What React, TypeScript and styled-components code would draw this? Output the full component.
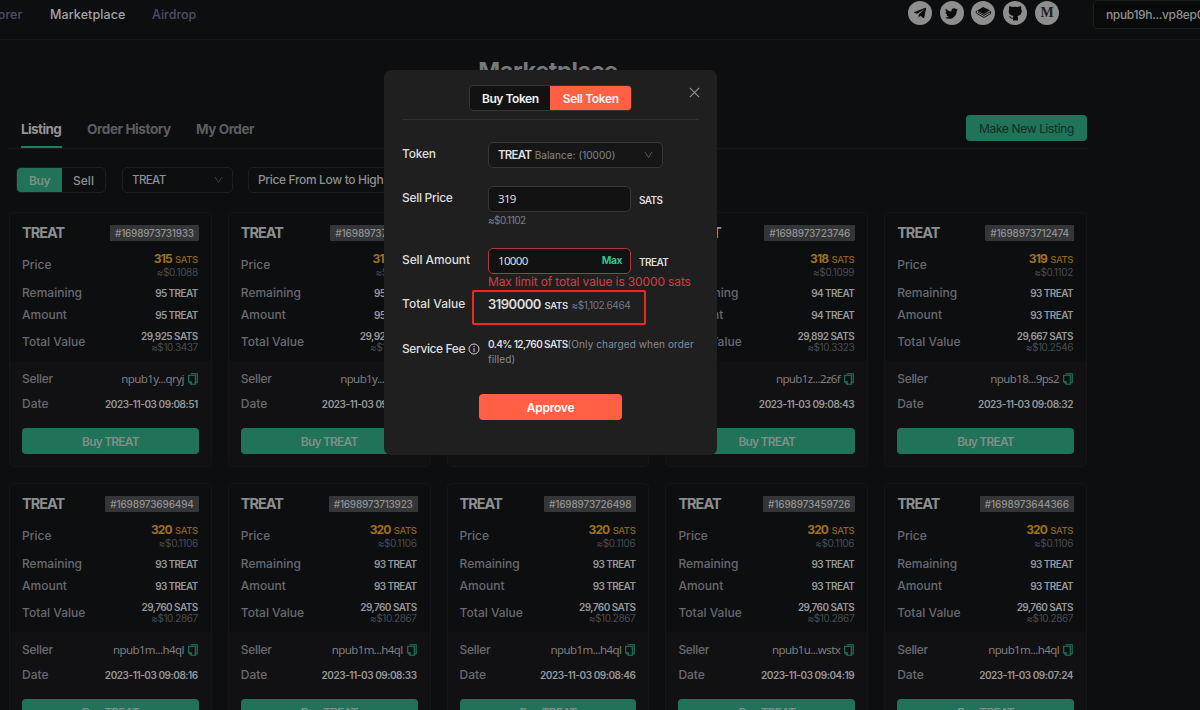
import React from "react";
import styled, { createGlobalStyle } from "styled-components";
import { FaTelegramPlane, FaTwitter } from "react-icons/fa";

const GlobalStyle = createGlobalStyle`
  * { box-sizing: border-box; }
  body { margin: 0; background: #0c0e10; overflow: hidden; }
`;

const Page = styled.div`
  position: relative;
  width: 1200px;
  height: 710px;
  overflow: hidden;
  background: #0c0e10;
  color: #8f9091;
  font-family: Inter, "Noto Sans", sans-serif;
  font-size: 12px;
  line-height: 16px;
  white-space: nowrap;
`;

/* Run of text with its own size, weight, tracking and colour. */
const Text = styled.span<{ $s?: number; $w?: number; $ls?: number; $c?: string }>`
  font-size: ${(p) => p.$s ?? 12}px;
  font-weight: ${(p) => p.$w ?? 500};
  letter-spacing: ${(p) => p.$ls ?? 0}px;
  color: ${(p) => p.$c ?? "inherit"};
`;

const Header = styled.header`
  display: flex;
  align-items: flex-start;
  justify-content: space-between;
  height: 40px;
  border-bottom: 1px solid #131518;
`;

const Nav = styled.nav`
  display: flex;
  gap: 27px;
  height: 29px;
  align-items: center;
  margin-left: -28px;
`;

const NavItem = styled.a<{ $active?: boolean; $width: number; $ls: number }>`
  width: ${(p) => p.$width}px;
  font-size: 12.5px;
  font-weight: 500;
  letter-spacing: ${(p) => p.$ls}px;
  color: ${(p) => (p.$active ? "#a3a4a5" : "#4d4f66")};
`;

const HeaderRight = styled.div`
  display: flex;
  margin-right: -60px;
`;

const Socials = styled.div`
  display: flex;
  gap: 7.8px;
  padding-top: 1px;
  margin-right: 34px;
`;

const Social = styled.span`
  display: flex;
  align-items: center;
  justify-content: center;
  width: 24px;
  height: 24px;
  border-radius: 50%;
  background: #8e8e8e;
  color: #0b0c0d;
`;

const MediumMark = styled.b`
  font: bold 14px/24px "Liberation Serif", serif;
  color: #1c1c1c;
`;

const Account = styled.div`
  width: 167px;
  height: 29px;
  padding-left: 12px;
  border: 1px solid #1c1e20;
  border-radius: 5px;
  background: #090a0a;
  line-height: 27px;
`;

const Main = styled.main`
  width: 1078px;
  margin-left: 9px;
`;

const Title = styled.h1`
  margin: 0;
  height: 77px;
  padding-top: 15px;
  text-align: center;
  font-size: 23.5px;
  font-weight: 700;
  letter-spacing: -0.4px;
  line-height: 32px;
  color: #77787a;
`;

const TabBar = styled.div`
  display: flex;
  justify-content: space-between;
  height: 32px;
  border-bottom: 1px solid #17191b;
`;

const Tabs = styled.div`
  display: flex;
  gap: 25px;
  padding-left: 12px;
`;

const Tab = styled.div<{ $active?: boolean; $width: number; $ls: number }>`
  width: ${(p) => p.$width}px;
  height: 31px;
  padding-top: 4px;
  font-size: 13.5px;
  font-weight: 700;
  letter-spacing: ${(p) => p.$ls}px;
  color: ${(p) => (p.$active ? "#939495" : "#5c5d60")};
  border-bottom: 2px solid ${(p) => (p.$active ? "#1f7d66" : "transparent")};
`;

const NewListing = styled.button`
  width: 121px;
  height: 26px;
  margin-top: -2px;
  padding: 0;
  border: 0;
  border-radius: 4px;
  background: #207258;
  font-family: inherit;
  color: #0f2d25;
`;

const Filters = styled.div`
  display: flex;
  height: 63px;
  padding: 18px 0 0 7px;
`;

const Side = styled.div`
  display: flex;
  width: 90px;
  height: 26px;
  margin-right: 16px;
  border: 1px solid #1c1e20;
  border-radius: 5px;
  overflow: hidden;
`;

const SideOption = styled.span<{ $active?: boolean }>`
  width: ${(p) => (p.$active ? 45 : 43)}px;
  text-align: center;
  line-height: 26px;
  background: ${(p) => (p.$active ? "#207258" : "transparent")};
`;

const Select = styled.div<{ $width: number; $gap?: number; $bg?: string; $line?: string }>`
  display: flex;
  align-items: center;
  justify-content: space-between;
  width: ${(p) => p.$width}px;
  height: 26px;
  margin-right: ${(p) => p.$gap ?? 0}px;
  padding: 0 9px;
  border: 1px solid ${(p) => p.$line ?? "#1c1e20"};
  border-radius: 5px;
  background: ${(p) => p.$bg ?? "transparent"};
`;

const Grid = styled.div`
  display: grid;
  grid-template-columns: repeat(5, 1fr);
  gap: 16px;
`;

const Card = styled.article`
  height: 255px;
  border: 1px solid #141619;
  border-radius: 5px;
  overflow: hidden;
`;

const CardTop = styled.div`
  height: 148px;
  padding: 11px 12px 0;
`;

const CardBottom = styled.div`
  height: 106px;
  padding: 5px 12px 0;
  background: #111113;
`;

const CardHead = styled.div`
  display: flex;
  align-items: center;
  justify-content: space-between;
  height: 17px;
`;

const Row = styled.div<{ $h: number }>`
  display: flex;
  align-items: center;
  justify-content: space-between;
  height: ${(p) => p.$h}px;
  padding-right: 1px;
`;

const Tag = styled.span`
  height: 16px;
  padding: 0 5px;
  border-radius: 1px;
  background: #343536;
  line-height: 16px;
`;

const Amounts = styled.div<{ $lead?: number }>`
  display: flex;
  flex-direction: column;
  align-items: flex-end;
  line-height: ${(p) => p.$lead ?? 11}px;
`;

const Seller = styled.span`
  display: flex;
  align-items: center;
  gap: 4px;
  font-family: "Noto Sans", sans-serif;
`;

const BuyButton = styled.button`
  display: block;
  width: 100%;
  height: 26px;
  margin-top: 11px;
  padding: 0;
  border: 0;
  border-radius: 4px;
  background: #207258;
  color: #7e9089;
  font-family: inherit;
`;

const Modal = styled.section`
  position: absolute;
  left: 384px;
  top: 70px;
  width: 333px;
  height: 385px;
  padding: 15px 18px 0;
  border-radius: 7px;
  background: #1f1f1f;
  color: #dededf;
`;

const ModalHead = styled.div`
  display: flex;
  justify-content: center;
  height: 35px;
  margin-bottom: 22px;
  border-bottom: 1px solid #2f3038;
`;

const Toggle = styled.div`
  display: flex;
  width: 163px;
  height: 26px;
  border: 1px solid #333436;
  border-radius: 4px;
  background: #121212;
  overflow: hidden;
`;

const ToggleOption = styled.span<{ $active?: boolean }>`
  flex: 1;
  margin: -1px;
  text-align: center;
  line-height: 28px;
  color: #f3f3f3;
  background: ${(p) => (p.$active ? "#ff6043" : "transparent")};
`;

const Close = styled.span`
  position: absolute;
  right: 17px;
  top: 17px;
  display: flex;
`;

const Field = styled.div<{ $h: number }>`
  display: grid;
  grid-template-columns: 86px 1fr;
  height: ${(p) => p.$h}px;
`;

const Label = styled.span<{ $ls?: number }>`
  display: flex;
  align-items: center;
  gap: 3px;
  height: 24px;
  font-weight: 500;
  letter-spacing: ${(p) => p.$ls ?? 0}px;
`;

const InputLine = styled.div`
  display: flex;
  align-items: center;
  gap: 8px;
`;

const Unit = styled.span`
  padding-top: 2px;
  font-size: 10px;
  font-weight: 600;
  letter-spacing: -0.6px;
`;

const Input = styled.div<{ $error?: boolean }>`
  display: flex;
  align-items: center;
  justify-content: space-between;
  width: 143px;
  height: 26px;
  padding: 0 8px 0 9px;
  border: 1px solid ${(p) => (p.$error ? "#a8383c" : "#36373a")};
  border-radius: 5px;
  background: #121212;
`;

const Value = styled.span`
  font-family: "Noto Sans", sans-serif;
  font-size: 11.5px;
  letter-spacing: -0.65px;
`;

const Hint = styled.div`
  height: 16px;
`;

const Total = styled.div`
  display: flex;
  align-items: baseline;
  gap: 3.5px;
  height: 35px;
  width: 174px;
  margin: -2px 0 0 -16px;
  padding: 2px 0 0 14px;
  border: 2px solid #f0281e;
  border-radius: 2px;
  line-height: 20px;
`;

const Fee = styled.div`
  font-size: 10px;
  line-height: 15px;
`;

const Approve = styled.button`
  display: block;
  width: 143px;
  height: 26px;
  margin: 0 0 0 77px;
  padding: 0;
  border: 0;
  border-radius: 4px;
  background: #ff6043;
  color: #fff;
  font-family: inherit;
`;

const Chevron = ({ color = "#3a3b3d" }: { color?: string }) => (
  <svg width="9" height="8" viewBox="0 0 9 8" fill="none" stroke={color} strokeWidth="1">
    <path d="M1 1L4.5 6.5L8 1" />
  </svg>
);

const CopyIcon = () => (
  <svg width="10" height="12" viewBox="0 0 10 12" fill="none" stroke="#207b60" strokeWidth="1.1">
    <path d="M2.7 .7H9.2V9.7H7.6" />
    <path d="M.7 2.3H7.3V11.2H3.2L.7 8.8Z" />
    <path d="M.8 8.7H3.2V11" />
  </svg>
);

const GitBookIcon = () => (
  <svg width="17" height="14" viewBox="0 0 17 14">
    <path d="M8 1L15 4.2L9 8.2L2 4.8Z" fill="currentColor" />
    <path d="M2 4.8C.9 5.2.8 7 2 7.6L8.4 11.2Q9 11.6 9.6 11.2L15.6 7.6V5.5L9 9.4L3 6.2" fill="none" stroke="currentColor" strokeWidth="1" />
  </svg>
);

const CatIcon = () => (
  <svg width="16" height="16" viewBox="0 0 16 16" fill="currentColor">
    <path d="M2.3 1.2Q4.2 1 5.6 2.1Q8.2 1.5 10.7 2.1Q12.2 1 13.9 1.2Q14.5 2.6 14.1 4Q15 5.2 14.6 7.3Q14.2 10.3 10.4 10.9Q11 11.5 11 12.5V15.5H6V13.6Q3.9 14.1 3 12.7Q2.6 11.9 1.7 11.4Q3.2 11 4 12.2Q4.7 13.1 6 12.6Q6 11.5 6.5 10.9Q2.4 10.4 1.8 7.3Q1.4 5.3 2.2 4Q1.8 2.6 2.3 1.2Z" />
  </svg>
);

const InfoIcon = () => (
  <svg width="12" height="12" viewBox="0 0 12 12" fill="none" stroke="#d0d0d1" strokeWidth="1">
    <circle cx="6" cy="6" r="5" />
    <path d="M6 5.2V9M6 3V4.2" />
  </svg>
);

const CloseIcon = () => (
  <svg width="11" height="11" viewBox="0 0 11 11" fill="none" stroke="#8e8f90" strokeWidth="1.2">
    <path d="M.8 .8L10.2 10.2M10.2 .8L.8 10.2" />
  </svg>
);

interface Listing {
  id: string;
  price: string;
  usd: string;
  amount: string;
  total: string;
  totalUsd: string;
  seller: string;
  date: string;
  tagTracking: number;
}

const L = (
  id: string, price: string, usd: string, amount: string, total: string,
  totalUsd: string, seller: string, date: string, tagTracking: number
): Listing => ({ id, price, usd, amount, total, totalUsd, seller, date, tagTracking });

const listings: Listing[] = [
  L("1698973731933", "315", "0.1088", "95", "29,925", "10.3437", "npub1y...qryj", "09:08:51", -0.24),
  L("1698973731712", "315", "0.1088", "95", "29,925", "10.3437", "npub1y...qryj", "09:08:47", -0.15),
  L("1698973728115", "317", "0.1095", "94", "29,798", "10.2998", "npub1z...2z6f", "09:08:45", -0.2),
  L("1698973723746", "318", "0.1099", "94", "29,892", "10.3323", "npub1z...2z6f", "09:08:43", -0.18),
  L("1698973712474", "319", "0.1102", "93", "29,667", "10.2546", "npub18...9ps2", "09:08:32", -0.19),
  L("1698973696494", "320", "0.1106", "93", "29,760", "10.2867", "npub1m...h4ql", "09:08:16", -0.15),
  L("1698973713923", "320", "0.1106", "93", "29,760", "10.2867", "npub1m...h4ql", "09:08:33", -0.24),
  L("1698973726498", "320", "0.1106", "93", "29,760", "10.2867", "npub1m...h4ql", "09:08:46", -0.16),
  L("1698973459726", "320", "0.1106", "93", "29,760", "10.2867", "npub1u...wstx", "09:04:19", -0.16),
  L("1698973644366", "320", "0.1106", "93", "29,760", "10.2867", "npub1m...h4ql", "09:07:24", -0.1),
];

const MUTED = "#696a70";
const DIM = "#4a4c50";
const BRIGHT = "#97989a";

const ListingCard = ({ item }: { item: Listing }) => (
  <Card>
    <CardTop>
      <CardHead>
        <Text $s={14.5} $w={700} $ls={-1} $c="#8d8e8f">TREAT</Text>
        <Tag>
          <Text $s={10} $w={500} $ls={item.tagTracking} $c="#909192">#{item.id}</Text>
        </Tag>
      </CardHead>
      <Row $h={48}>
        <Text $c={MUTED}>Price</Text>
        <Amounts $lead={12}>
          <span>
            <Text $s={12} $w={700} $ls={-0.9} $c="#a1701f">{item.price}</Text>{" "}
            <Text $s={9.5} $ls={-0.4} $c="#8f641f">SATS</Text>
          </span>
          <Text $s={10} $w={400} $ls={-0.35} $c={DIM}>≈${item.usd}</Text>
        </Amounts>
      </Row>
      <Row $h={7}>
        <Text $c={MUTED}>Remaining</Text>
        <Text $s={10} $w={600} $ls={-0.6} $c={BRIGHT}>{item.amount} TREAT</Text>
      </Row>
      <Row $h={37}>
        <Text $c={MUTED}>Amount</Text>
        <Text $s={10} $w={600} $ls={-0.6} $c={BRIGHT}>{item.amount} TREAT</Text>
      </Row>
      <Row $h={17}>
        <Text $c={MUTED}>Total Value</Text>
        <Amounts>
          <Text $s={10} $w={600} $ls={-0.55} $c={BRIGHT}>{item.total} SATS</Text>
          <Text $s={10} $w={400} $ls={-0.4} $c={DIM}>≈${item.totalUsd}</Text>
        </Amounts>
      </Row>
    </CardTop>
    <CardBottom>
      <Row $h={25}>
        <Text $ls={-0.3} $c={MUTED}>Seller</Text>
        <Seller>
          <Text $s={11.5} $w={400} $ls={-0.6} $c="#7e7f81">{item.seller}</Text>
          <CopyIcon />
        </Seller>
      </Row>
      <Row $h={26}>
        <Text $c={MUTED}>Date</Text>
        <Text $s={10} $w={600} $ls={-0.46} $c={BRIGHT}>2023-11-03 {item.date}</Text>
      </Row>
      <BuyButton><Text $s={12} $w={600} $ls={-0.8}>Buy TREAT</Text></BuyButton>
    </CardBottom>
  </Card>
);

export default function App() {
  return (
    <Page>
      <GlobalStyle />
      <Header>
        <Nav>
          <NavItem $width={51} $ls={0.1}>Explorer</NavItem>
          <NavItem $active $width={75} $ls={0.1}>Marketplace</NavItem>
          <NavItem $width={60} $ls={0}>Airdrop</NavItem>
        </Nav>
        <HeaderRight>
          <Socials>
            <Social><FaTelegramPlane size={14} /></Social>
            <Social><FaTwitter size={13} /></Social>
            <Social><GitBookIcon /></Social>
            <Social><CatIcon /></Social>
            <Social><MediumMark>M</MediumMark></Social>
          </Socials>
          <Account><Text $s={12} $ls={-0.35}>npub19h...vp8ep0</Text></Account>
        </HeaderRight>
      </Header>

      <Main>
        <Title>Marketplace</Title>
        <TabBar>
          <Tabs>
            <Tab $active $width={41} $ls={-0.6}>Listing</Tab>
            <Tab $width={84} $ls={-0.4}>Order History</Tab>
            <Tab $width={60} $ls={-0.45}>My Order</Tab>
          </Tabs>
          <NewListing><Text $s={12} $w={400} $ls={-0.35}>Make New Listing</Text></NewListing>
        </TabBar>
        <Filters>
          <Side>
            <SideOption $active><Text $s={12} $w={600} $ls={-0.4} $c="#7e9089">Buy</Text></SideOption>
            <SideOption><Text $s={12} $w={500}>Sell</Text></SideOption>
          </Side>
          <Select $width={111} $gap={15}>
            <Text $s={11.5} $w={500} $ls={-0.6}>TREAT</Text>
            <Chevron />
          </Select>
          <Select $width={160}>
            <Text $s={12} $w={500} $ls={-0.35}>Price From Low to High</Text>
          </Select>
        </Filters>
        <Grid>
          {listings.map((item) => <ListingCard key={item.id} item={item} />)}
        </Grid>
      </Main>

      <Modal>
        <ModalHead>
          <Toggle>
            <ToggleOption><Text $s={12} $w={600} $ls={-0.45}>Buy Token</Text></ToggleOption>
            <ToggleOption $active><Text $s={12} $w={600} $ls={-0.35}>Sell Token</Text></ToggleOption>
          </Toggle>
        </ModalHead>
        <Close><CloseIcon /></Close>
        <Field $h={44}>
          <Label $ls={-0.2}>Token</Label>
          <Select $width={175} $bg="#161616" $line="#36373a">
            <span>
              <Text $s={11.5} $w={600} $ls={-0.75}>TREAT</Text>{" "}
              <Text $s={10} $w={400} $ls={0.05} $c="#83868f">Balance: (10000)</Text>
            </span>
            <Chevron color="#5a5b5d" />
          </Select>
        </Field>
        <Field $h={62}>
          <Label $ls={-0.3}>Sell Price</Label>
          <div>
            <InputLine>
              <Input><Value>319</Value></Input>
              <Unit>SATS</Unit>
            </InputLine>
            <Hint><Text $s={10} $w={400} $ls={-0.5} $c="#7c7f88">≈$0.1102</Text></Hint>
          </div>
        </Field>
        <Field $h={44}>
          <Label $ls={-0.1}>Sell Amount</Label>
          <div>
            <InputLine>
              <Input $error>
                <Value>10000</Value>
                <Text $s={10.5} $w={600} $ls={-0.5} $c="#2fcf97">Max</Text>
              </Input>
              <Unit>TREAT</Unit>
            </InputLine>
            <Hint><Text $s={12} $w={400} $ls={-0.13} $c="#cf4043">Max limit of total value is 30000 sats</Text></Hint>
          </div>
        </Field>
        <Field $h={45}>
          <Label>Total Value</Label>
          <Total>
            <Text $s={13} $w={600} $ls={-0.5}>3190000</Text>
            <Text $s={9.5} $w={600} $ls={-0.25}>SATS</Text>
            <Text $s={10} $w={400} $ls={-0.4} $c="#737986">≈$1,102.6464</Text>
          </Total>
        </Field>
        <Field $h={57}>
          <Label $ls={-0.4}>Service Fee<InfoIcon /></Label>
          <Fee>
            <Text $s={10} $w={600} $ls={-0.6}>0.4% 12,760 SATS</Text>
            <Text $s={10} $w={400} $ls={0.1} $c="#858b99">(Only charged when order<br />filled)</Text>
          </Fee>
        </Field>
        <Approve><Text $s={12} $w={600} $ls={-0.25}>Approve</Text></Approve>
      </Modal>
    </Page>
  );
}
